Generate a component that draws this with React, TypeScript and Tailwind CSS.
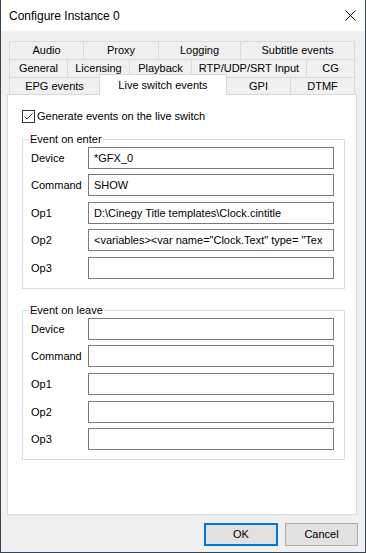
import React from 'react'

const FONT = "font-['Liberation_Sans',Arial,sans-serif]"

type Tab = { label: string; w: string; last?: boolean }

const ROW1: Tab[] = [
  { label: 'Audio', w: 'w-[74px]' },
  { label: 'Proxy', w: 'w-[75px]' },
  { label: 'Logging', w: 'w-[82px]' },
  { label: 'Subtitle events', w: 'w-[115px]', last: true },
]

const ROW2: Tab[] = [
  { label: 'General', w: 'w-[58px]' },
  { label: 'Licensing', w: 'w-[62px]' },
  { label: 'Playback', w: 'w-[62px]' },
  { label: 'RTP/UDP/SRT Input', w: 'w-[115px]' },
  { label: 'CG', w: 'w-[49px]', last: true },
]

function TabCell({ tab }: { tab: Tab }) {
  return (
    <div
      className={`${tab.w} h-full flex items-center justify-center border-l border-t border-[#d9d9d9] bg-[#f0f0f0] ${
        tab.last ? 'border-r' : ''
      }`}
    >
      {tab.label}
    </div>
  )
}

function Field({ label, value, className = '' }: { label: string; value?: string; className?: string }) {
  return (
    <div className={`flex items-center h-[22px] pl-[8px] ${className}`}>
      <span className="w-[57px] shrink-0 pt-[1px]">{label}</span>
      <div className="w-[246px] h-[22px] border border-[#7a7a7a] bg-white flex items-center pl-[5px] whitespace-nowrap">
        {value}
      </div>
    </div>
  )
}

function Group({ title, values, gaps }: { title: string; values: string[]; gaps: string[] }) {
  const labels = ['Device', 'Command', 'Op1', 'Op2', 'Op3']
  return (
    <fieldset className="w-[323px] border border-[#dcdcdc] pb-[9px]">
      <legend className="ml-[6px] px-[1px] leading-[14px]">{title}</legend>
      {labels.map((l, i) => (
        <Field key={l} label={l} value={values[i]} className={gaps[i]} />
      ))}
    </fieldset>
  )
}

export default function App() {
  return (
    <div className={`${FONT} w-[366px] h-[553px] flex flex-col border-l border-r border-b border-[#33475b] text-[11px] text-black bg-[#f0f0f0]`}>
      {/* Title bar */}
      <div className="h-[31px] bg-white flex items-center justify-between pl-[8px] pr-[9px] shrink-0">
        <span className="text-[12px]">Configure Instance 0</span>
        <svg width="11" height="11" viewBox="0 0 11 11">
          <path d="M0.5 0.5 L10.5 10.5 M10.5 0.5 L0.5 10.5" stroke="#000" strokeWidth="1" />
        </svg>
      </div>

      {/* Body */}
      <div className="flex-1 flex flex-col pt-[10px]">
        <div className="ml-[8px] flex flex-col">
          <div className="flex h-[18px]">
            {ROW1.map(t => <TabCell key={t.label} tab={t} />)}
          </div>
          <div className="flex h-[18px]">
            {ROW2.map(t => <TabCell key={t.label} tab={t} />)}
          </div>
          <div className="flex h-[17px]">
            <TabCell tab={{ label: 'EPG events', w: 'w-[90px]' }} />
            <div className="relative z-10 self-start -mt-[3px] w-[128px] h-[21px] flex justify-center pt-[2px] bg-white border-l border-t border-r border-[#d9d9d9]">
              Live switch events
            </div>
            <div className="w-[63px] h-full flex items-center justify-center border-t border-[#d9d9d9]">GPI</div>
            <TabCell tab={{ label: 'DTMF', w: 'w-[65px]', last: true }} />
          </div>
        </div>

        {/* Panel */}
        <div className="ml-[6px] w-[350px] h-[421px] bg-white border border-[#d9d9d9] pt-[15px] pl-[14px]">
          <div className="flex items-center h-[13px] gap-[2px]">
            <svg width="13" height="13" viewBox="0 0 13 13">
              <rect x="0.5" y="0.5" width="12" height="12" fill="#fff" stroke="#333" />
              <path d="M2.5 6.5 L5 9 L10.5 3.5" fill="none" stroke="#333" strokeWidth="1" />
            </svg>
            <span>Generate events on the live switch</span>
          </div>

          <div className="mt-[9px]">
            <Group
              title="Event on enter"
              values={['*GFX_0', 'SHOW', 'D:\\Cinegy Title templates\\Clock.cintitle', '<variables><var name="Clock.Text" type= "Tex', '']}
              gaps={['mt-[1px]', 'mt-[5px]', 'mt-[6px]', 'mt-[5px]', 'mt-[6px]']}
            />
          </div>
          <div className="mt-[14px]">
            <Group
              title="Event on leave"
              values={['', '', '', '', '']}
              gaps={['mt-[1px]', 'mt-[5px]', 'mt-[6px]', 'mt-[6px]', 'mt-[5px]']}
            />
          </div>
        </div>

        {/* Buttons */}
        <div className="mt-[8px] flex justify-end gap-[7px] mr-[7px]">
          <button className="w-[74px] h-[23px] bg-[#e1e1e1] border-2 border-[#0078d7] flex items-center justify-center">
            OK
          </button>
          <button className="w-[73px] h-[23px] bg-[#e1e1e1] border border-[#adadad] flex items-center justify-center">
            Cancel
          </button>
        </div>
      </div>
    </div>
  )
}
